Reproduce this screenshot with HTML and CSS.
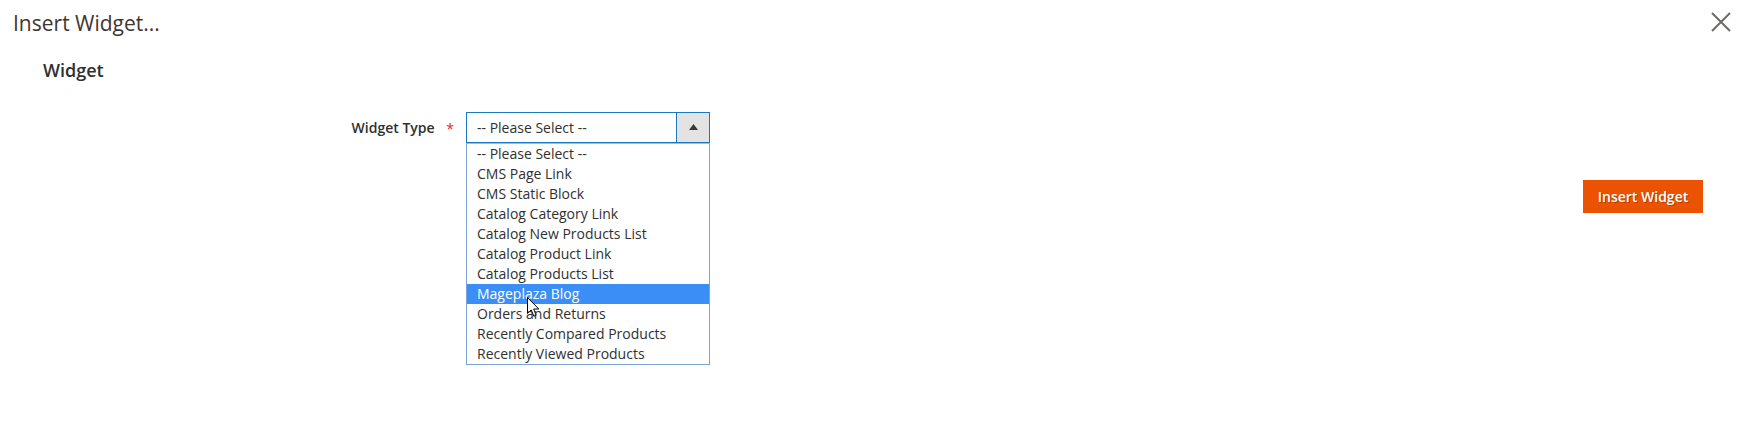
FILE: index.html
```html
<!DOCTYPE html>
<html>
<head>
<meta charset="utf-8">
<link rel="stylesheet" href="styles.css">
</head>
<body>
<div class="modal">
  <header class="modal-header">
    <h1 class="modal-title">Insert Widget...</h1>
    <button class="action-close" aria-label="Close">
      <svg width="20" height="20" viewBox="0 0 20 20"><path d="M1 1L19 19M19 1L1 19" stroke="#736963" stroke-width="2" fill="none"/></svg>
    </button>
  </header>
  <div class="modal-body">
    <div class="fieldset">
      <div class="legend">Widget</div>
      <div class="field">
        <label class="label">Widget Type <span class="req">*</span></label>
        <div class="control">
          <div class="select">
            <span class="select-value">-- Please Select --</span>
            <span class="select-arrow"><svg width="9" height="6" viewBox="0 0 9 6"><path d="M0 6L4.5 0L9 6Z" fill="#41362f"/></svg></span>
          </div>
          <ul class="options">
            <li>-- Please Select --</li>
            <li>CMS Page Link</li>
            <li>CMS Static Block</li>
            <li>Catalog Category Link</li>
            <li>Catalog New Products List</li>
            <li>Catalog Product Link</li>
            <li>Catalog Products List</li>
            <li class="active">Mageplaza Blog
              <svg class="cursor" width="14" height="21" viewBox="0 0 14 21"><path d="M0.5 0.5L0.5 16.5L4.2 12.9L6.8 19.2L9.2 18.2L6.7 12L11.8 12Z" fill="#fff" stroke="#000" stroke-width="1" stroke-linejoin="miter"/></svg>
            </li>
            <li>Orders and Returns</li>
            <li>Recently Compared Products</li>
            <li>Recently Viewed Products</li>
          </ul>
        </div>
      </div>
    </div>
    <div class="actions">
      <button class="primary">Insert Widget</button>
    </div>
  </div>
</div>
</body>
</html>
```
FILE: styles.css
```css
* { box-sizing: border-box; }
html, body { margin: 0; padding: 0; background: #fff; }
body {
  font-family: "Open Sans", "Liberation Sans", sans-serif;
  color: #303030;
  width: 1758px;
  height: 422px;
  overflow: hidden;
}
.modal-header {
  display: flex;
  justify-content: space-between;
  align-items: flex-start;
  padding: 8px 27px 0 13px;
}
.modal-title {
  margin: 0;
  font-size: 21px;
  font-weight: 400;
  line-height: 30px;
  color: #41362f;
}
.action-close {
  border: 0;
  background: none;
  padding: 0;
  margin-top: 4px;
  width: 20px;
  height: 20px;
  cursor: pointer;
}
.action-close svg { display: block; }
.modal-body {
  display: flex;
  justify-content: space-between;
  padding: 0 55px 0 43px;
}
.legend {
  font-size: 18px;
  font-weight: 600;
  line-height: 24px;
  color: #303030;
  margin-top: 20px;
}
.field {
  display: flex;
  align-items: flex-start;
  margin-top: 30px;
}
.label {
  width: 423px;
  text-align: right;
  font-size: 14px;
  font-weight: 600;
  color: #303030;
  padding-right: 12px;
  line-height: 31px;
}
.req {
  color: #e22626;
  font-weight: 400;
  margin-left: 8px;
  position: relative;
  top: 1px;
}
.control { width: 244px; }
.select {
  display: flex;
  height: 31px;
  border: 1px solid #1979c3;
  background: #fff;
}
.select-value {
  flex: 1;
  font-size: 14px;
  line-height: 29px;
  padding-left: 10px;
  color: #303030;
}
.select-arrow {
  width: 33px;
  border-left: 1px solid #1979c3;
  background: #e3e3e3;
  display: flex;
  align-items: center;
  justify-content: center;
}
.select-arrow svg { display: block; margin-top: -1px; }
.options {
  list-style: none;
  margin: 0;
  padding: 0;
  border: 1px solid #7da2d8;
  border-top-color: #9dbbe6;
}
.options li {
  position: relative;
  height: 20px;
  line-height: 20px;
  font-size: 14px;
  padding-left: 10px;
  color: #303030;
  white-space: nowrap;
}
.options li.active {
  background: #3b8ef5;
  color: #fff;
}
.cursor {
  position: absolute;
  left: 60px;
  top: 13px;
  display: block;
}
.actions { padding-top: 142px; }
.primary {
  background: #eb5202;
  border: 1px solid #eb5202;
  color: #fff;
  font-family: "Open Sans", "Liberation Sans", sans-serif;
  font-size: 14px;
  font-weight: 600;
  height: 33px;
  width: 120px;
  padding: 0;
  text-shadow: 1px 1px 0 rgba(0,0,0,0.25);
}
```
